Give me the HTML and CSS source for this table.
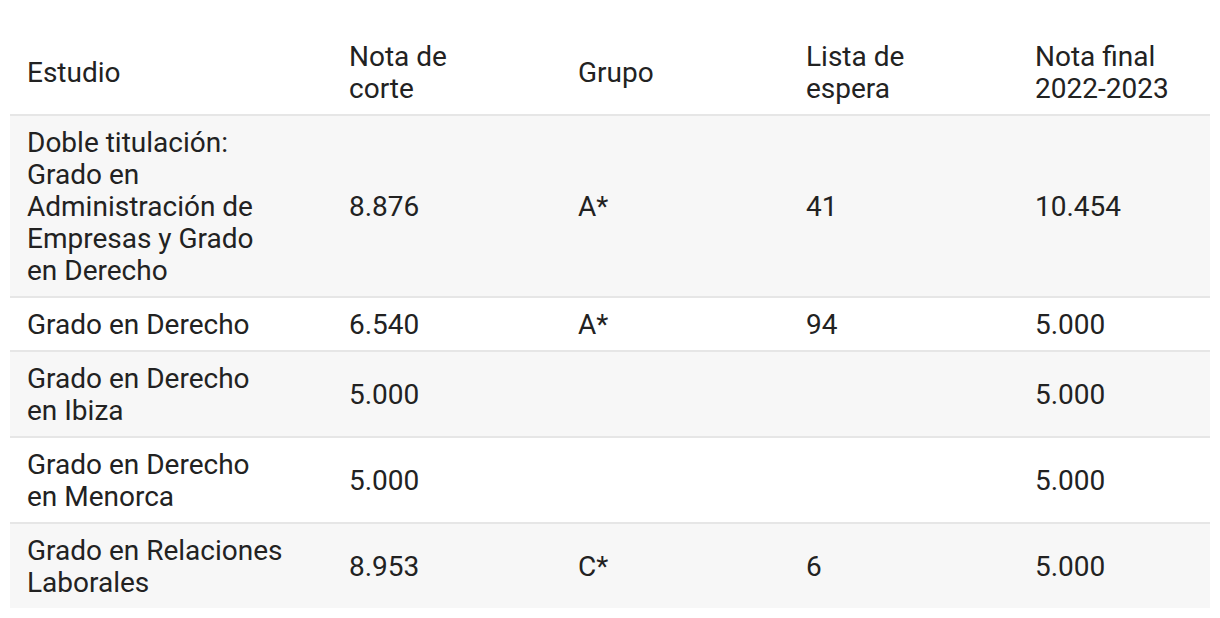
FILE: index.html
```html
<!DOCTYPE html>
<html lang="es">
<head>
<meta charset="utf-8">
<title>Notas de corte</title>
<link rel="stylesheet" href="styles.css">
</head>
<body>
<div class="wrap">
<table class="notas">
<colgroup>
<col class="c1"><col class="c2"><col class="c3"><col class="c4"><col class="c5">
</colgroup>
<thead>
<tr><th>Estudio</th><th>Nota de<br>corte</th><th>Grupo</th><th>Lista de<br>espera</th><th>Nota final<br>2022-2023</th></tr>
</thead>
<tbody>
<tr class="odd"><td>Doble titulación:<br>Grado en<br>Administración de<br>Empresas y Grado<br>en Derecho</td><td>8.876</td><td>A*</td><td>41</td><td>10.454</td></tr>
<tr><td>Grado en Derecho</td><td>6.540</td><td>A*</td><td>94</td><td>5.000</td></tr>
<tr class="odd"><td>Grado en Derecho<br>en Ibiza</td><td>5.000</td><td></td><td></td><td>5.000</td></tr>
<tr><td>Grado en Derecho<br>en Menorca</td><td>5.000</td><td></td><td></td><td>5.000</td></tr>
<tr class="odd"><td>Grado en Relaciones<br>Laborales</td><td>8.953</td><td>C*</td><td>6</td><td>5.000</td></tr>
</tbody>
</table>
</div>
</body>
</html>
```
FILE: styles.css
```css
html, body { margin: 0; padding: 0; background: #fff; }
.wrap { padding: 30px 10px 10px; }
.notas {
  width: 1200px;
  border-collapse: collapse;
  table-layout: fixed;
  font-family: Roboto, "Liberation Sans", sans-serif;
  font-size: 28px;
  line-height: 32px;
  color: #222;
}
.c1 { width: 322px; }
.c2 { width: 229px; }
.c3 { width: 228px; }
.c4 { width: 229px; }
.c5 { width: 192px; }
.notas th, .notas td {
  text-align: left;
  font-weight: 400;
  vertical-align: middle;
  padding: 11px 17px 9px;
}
.notas tbody tr { border-top: 2px solid #e6e6e6; }
.notas tbody tr.odd { background: #f7f7f7; }
```
